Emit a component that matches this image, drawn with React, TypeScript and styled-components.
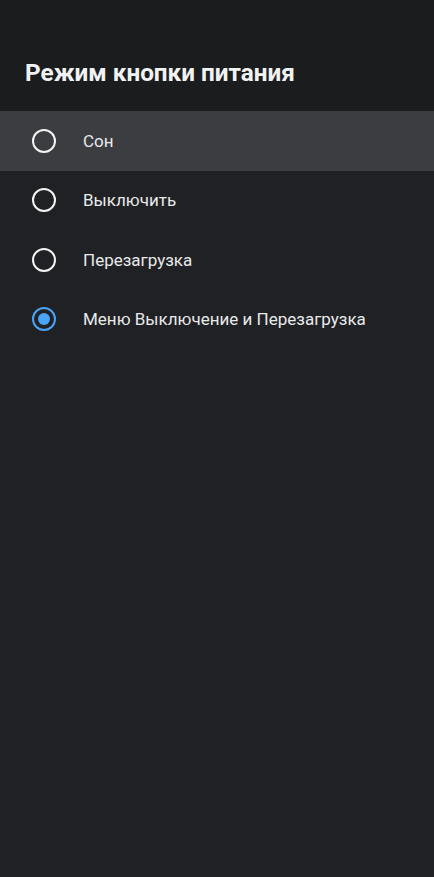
import React from "react";
import styled, { createGlobalStyle } from "styled-components";

const Global = createGlobalStyle`
  html, body { margin: 0; padding: 0; background: #202124; }
  body { font-family: Roboto, "Noto Sans", sans-serif; }
`;

const Page = styled.div`
  width: 434px;
  min-height: 877px;
  background: #202124;
  display: flex;
  flex-direction: column;
`;

const Header = styled.header`
  height: 111px;
  background: #1b1c1e;
  display: flex;
  align-items: flex-start;
  padding: 59px 25px 0;
  box-sizing: border-box;
`;

const Title = styled.h1`
  margin: 0;
  font-size: 24.3px;
  line-height: 28px;
  font-weight: 700;
  color: #f1f2f3;
`;

const List = styled.div`
  display: flex;
  flex-direction: column;
`;

const Row = styled.div<{ $focused?: boolean }>`
  height: 59.5px;
  display: flex;
  align-items: center;
  padding-left: 32px;
  background: ${(p) => (p.$focused ? "#3c3d41" : "transparent")};
  box-sizing: border-box;
`;

const Radio = styled.span<{ $checked?: boolean }>`
  width: 24px;
  height: 24px;
  border-radius: 50%;
  border: 2px solid ${(p) => (p.$checked ? "#4aa3f5" : "#f4f4f4")};
  box-sizing: border-box;
  display: flex;
  align-items: center;
  justify-content: center;
  flex-shrink: 0;
  &::after {
    content: "";
    display: ${(p) => (p.$checked ? "block" : "none")};
    width: 12px;
    height: 12px;
    border-radius: 50%;
    background: #4aa3f5;
  }
`;

const Label = styled.span`
  margin-left: 27px;
  font-size: 17px;
  color: #e8e9eb;
`;

const items = [
  { label: "Сон", focused: true },
  { label: "Выключить" },
  { label: "Перезагрузка" },
  { label: "Меню Выключение и Перезагрузка", checked: true },
];

export default function App() {
  return (
    <Page>
      <Global />
      <Header>
        <Title>Режим кнопки питания</Title>
      </Header>
      <List>
        {items.map((it) => (
          <Row key={it.label} $focused={it.focused}>
            <Radio $checked={it.checked} />
            <Label>{it.label}</Label>
          </Row>
        ))}
      </List>
    </Page>
  );
}
